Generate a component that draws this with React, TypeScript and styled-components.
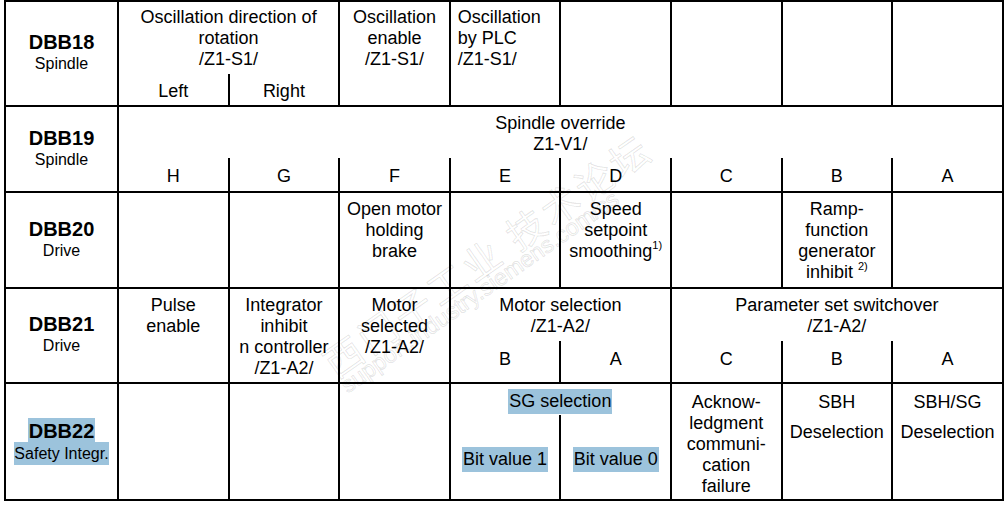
import React from "react";
import styled, { createGlobalStyle } from "styled-components";

const GlobalStyle = createGlobalStyle`
  * {
    box-sizing: border-box;
  }
  html,
  body {
    margin: 0;
    padding: 0;
    background: #fff;
  }
  body {
    font-family: "Liberation Sans", Arial, sans-serif;
    color: #000;
  }
`;

const Page = styled.div`
  position: relative;
  width: 1008px;
  height: 508px;
  overflow: hidden;
  padding-left: 4px;
`;

const Table = styled.div`
  width: 999.8px;
  border-top: 2px solid #000;
  border-right: 2px solid #000;
`;

const Row = styled.div<{ $h: number; $rows: string }>`
  display: grid;
  grid-template-columns: 113px repeat(8, 110.6px);
  grid-template-rows: ${(p) => p.$rows};
  height: ${(p) => p.$h}px;
  border-bottom: 2px solid #000;
`;

const LabelCell = styled.div`
  grid-column: 1;
  grid-row: 1 / -1;
  border-left: 2px solid #000;
  display: flex;
  flex-direction: column;
  align-items: center;
  justify-content: center;
`;

const ByteName = styled.div`
  font-size: 20px;
  font-weight: 700;
  line-height: 21px;
`;

const Area = styled.div`
  font-size: 16px;
  line-height: 22px;
`;

const Cell = styled.div<{ $col: string | number; $row?: string | number; $left?: boolean; $pt?: number }>`
  grid-column: ${(p) => p.$col};
  grid-row: ${(p) => p.$row ?? "1 / -1"};
  border-left: 2px solid #000;
  padding: ${(p) => p.$pt ?? 6}px 2px 0 ${(p) => (p.$left ? 7 : 2)}px;
  font-size: 18px;
  line-height: 21px;
  text-align: ${(p) => (p.$left ? "left" : "center")};
  white-space: nowrap;
`;

const BitCell = styled.div<{ $col: number; $pt?: number; $pb?: number }>`
  grid-column: ${(p) => p.$col};
  grid-row: 2;
  border-left: 2px solid #000;
  display: flex;
  align-items: center;
  justify-content: center;
  padding-top: ${(p) => p.$pt ?? 0}px;
  padding-bottom: ${(p) => p.$pb ?? 0}px;
  font-size: 18px;
  line-height: 21px;
  white-space: nowrap;
`;

const Sup = styled.sup`
  font-size: 11px;
  line-height: 0;
  vertical-align: 8px;
`;

const Gap = styled.div`
  margin-top: 9px;
`;

const Mark = styled.span<{ $lh: number; $pt?: number; $px?: number }>`
  display: inline-block;
  background: #9cc3dc;
  line-height: ${(p) => p.$lh}px;
  padding: ${(p) => p.$pt ?? 0}px ${(p) => p.$px ?? 0}px 0;
`;

const Watermark = styled.span<{ $x: number; $y: number; $size: number }>`
  position: absolute;
  left: ${(p) => p.$x}px;
  top: ${(p) => p.$y}px;
  font-size: ${(p) => p.$size}px;
  line-height: 1;
  white-space: nowrap;
  color: transparent;
  -webkit-text-stroke: 1px rgba(0, 0, 0, 0.11);
  transform: rotate(-35deg);
  transform-origin: 0 100%;
  pointer-events: none;
`;

const Cjk = styled(Watermark)`
  font-family: "Noto Sans CJK SC", "Noto Sans", sans-serif;
  letter-spacing: 4px;
`;

const bits = ["H", "G", "F", "E", "D", "C", "B", "A"];

export default function App() {
  return (
    <Page>
      <GlobalStyle />
      <Table>
        <Row $h={105} $rows="72px 1fr">
          <LabelCell>
            <ByteName>DBB18</ByteName>
            <Area>Spindle</Area>
          </LabelCell>
          <Cell $col="2 / 4" $row={1} $pt={5}>
            Oscillation direction of
            <br />
            rotation
            <br />
            /Z1-S1/
          </Cell>
          <BitCell $col={2} $pt={3}>Left</BitCell>
          <BitCell $col={3} $pt={3}>Right</BitCell>
          <Cell $col={4} $pt={5}>
            Oscillation
            <br />
            enable
            <br />
            /Z1-S1/
          </Cell>
          <Cell $col={5} $pt={5} $left>
            Oscillation
            <br />
            by PLC
            <br />
            /Z1-S1/
          </Cell>
          <Cell $col={6} />
          <Cell $col={7} />
          <Cell $col={8} />
          <Cell $col={9} />
        </Row>

        <Row $h={86} $rows="51px 1fr">
          <LabelCell>
            <ByteName>DBB19</ByteName>
            <Area>Spindle</Area>
          </LabelCell>
          <Cell $col="2 / 10" $row={1}>
            Spindle override
            <br />
            Z1-V1/
          </Cell>
          {bits.map((b, i) => (
            <BitCell key={b} $col={i + 2} $pt={3}>
              {b}
            </BitCell>
          ))}
        </Row>

        <Row $h={96} $rows="1fr">
          <LabelCell>
            <ByteName>DBB20</ByteName>
            <Area>Drive</Area>
          </LabelCell>
          <Cell $col={2} />
          <Cell $col={3} />
          <Cell $col={4}>
            Open motor
            <br />
            holding
            <br />
            brake
          </Cell>
          <Cell $col={5} />
          <Cell $col={6}>
            Speed
            <br />
            setpoint
            <br />
            smoothing<Sup>1)</Sup>
          </Cell>
          <Cell $col={7} />
          <Cell $col={8}>
            Ramp-
            <br />
            function
            <br />
            generator
            <br />
            inhibit <Sup>2)</Sup>
          </Cell>
          <Cell $col={9} />
        </Row>

        <Row $h={95} $rows="52px 1fr">
          <LabelCell>
            <ByteName>DBB21</ByteName>
            <Area>Drive</Area>
          </LabelCell>
          <Cell $col={2}>
            Pulse
            <br />
            enable
          </Cell>
          <Cell $col={3}>
            Integrator
            <br />
            inhibit
            <br />
            n controller
            <br />
            /Z1-A2/
          </Cell>
          <Cell $col={4}>
            Motor
            <br />
            selected
            <br />
            /Z1-A2/
          </Cell>
          <Cell $col="5 / 7" $row={1}>
            Motor selection
            <br />
            /Z1-A2/
          </Cell>
          <BitCell $col={5} $pb={4}>B</BitCell>
          <BitCell $col={6} $pb={4}>A</BitCell>
          <Cell $col="7 / 10" $row={1}>
            Parameter set switchover
            <br />
            /Z1-A2/
          </Cell>
          <BitCell $col={7} $pb={4}>C</BitCell>
          <BitCell $col={8} $pb={4}>B</BitCell>
          <BitCell $col={9} $pb={4}>A</BitCell>
        </Row>

        <Row $h={117} $rows="31px 1fr">
          <LabelCell>
            <ByteName>
              <Mark $lh={21} $pt={3} $px={1}>DBB22</Mark>
            </ByteName>
            <Area>
              <Mark $lh={23}>Safety Integr.</Mark>
            </Area>
          </LabelCell>
          <Cell $col={2} />
          <Cell $col={3} />
          <Cell $col={4} />
          <Cell $col="5 / 7" $row={1} $pt={5}>
            <Mark $lh={25} $px={1}>SG selection</Mark>
          </Cell>
          <BitCell $col={5} $pt={5}>
            <Mark $lh={25} $px={1}>Bit value 1</Mark>
          </BitCell>
          <BitCell $col={6} $pt={5}>
            <Mark $lh={25} $px={1}>Bit value 0</Mark>
          </BitCell>
          <Cell $col={7} $pt={8}>
            Acknow-
            <br />
            ledgment
            <br />
            communi-
            <br />
            cation
            <br />
            failure
          </Cell>
          <Cell $col={8} $pt={8}>
            SBH
            <Gap>Deselection</Gap>
          </Cell>
          <Cell $col={9} $pt={8}>
            SBH/SG
            <Gap>Deselection</Gap>
          </Cell>
        </Row>
      </Table>

      <Cjk $x={338} $y={344} $size={38}>
        西门子工业 技术论坛
      </Cjk>
      <Watermark $x={350} $y={374} $size={23}>
        support.industry.siemens.com/cs
      </Watermark>
    </Page>
  );
}
